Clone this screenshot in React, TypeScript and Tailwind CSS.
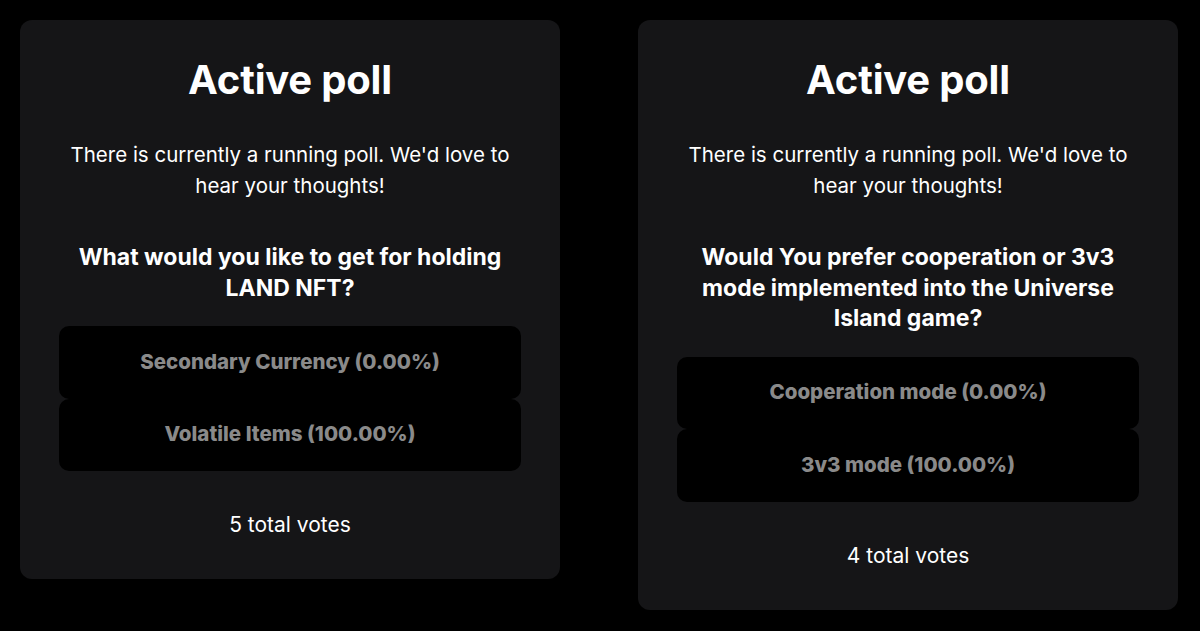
import React from 'react';

type Poll = {
    question: string;
    options: { label: string; percent: number }[];
    votes: number;
};

const polls: Poll[] = [
    {
        question: 'What would you like to get for holding LAND NFT?',
        options: [
            { label: 'Secondary Currency', percent: 0 },
            { label: 'Volatile Items', percent: 100 },
        ],
        votes: 5,
    },
    {
        question: 'Would You prefer cooperation or 3v3 mode implemented into the Universe Island game?',
        options: [
            { label: 'Cooperation mode', percent: 0 },
            { label: '3v3 mode', percent: 100 },
        ],
        votes: 4,
    },
];

const PollCard = ({ poll }: { poll: Poll }) => (
    <div className="w-[540px] rounded-[12px] bg-[#151517] px-[39px] pt-[34px] pb-[38px] text-center text-white">
        <h2 className="text-[40px] font-bold leading-[52px] tracking-[-0.005em]">Active poll</h2>
        <p className="mt-[33px] px-[6px] text-[20.5px] leading-[31px]">
            There is currently a running poll. We'd love to hear your thoughts!
        </p>
        <p className="mt-[41px] px-[16px] text-[23px] font-bold leading-[30.5px]">{poll.question}</p>
        <div className="mt-[23px] flex flex-col">
            {poll.options.map(o => (
                <div
                    key={o.label}
                    className="flex h-[72.5px] items-center justify-center rounded-[10px] bg-black text-[20.5px] font-extrabold text-[#8a8a8a]"
                >
                    {o.label} ({o.percent.toFixed(2)}%)
                </div>
            ))}
        </div>
        <p className="mt-[38px] text-[21px] leading-[32px]">{poll.votes} total votes</p>
    </div>
);

export default function App() {
    return (
        <div className="flex min-h-[631px] items-start gap-[78px] bg-black px-[20px] pt-[20px] font-['Inter',sans-serif]">
            {polls.map(p => (
                <PollCard key={p.question} poll={p} />
            ))}
        </div>
    );
}
